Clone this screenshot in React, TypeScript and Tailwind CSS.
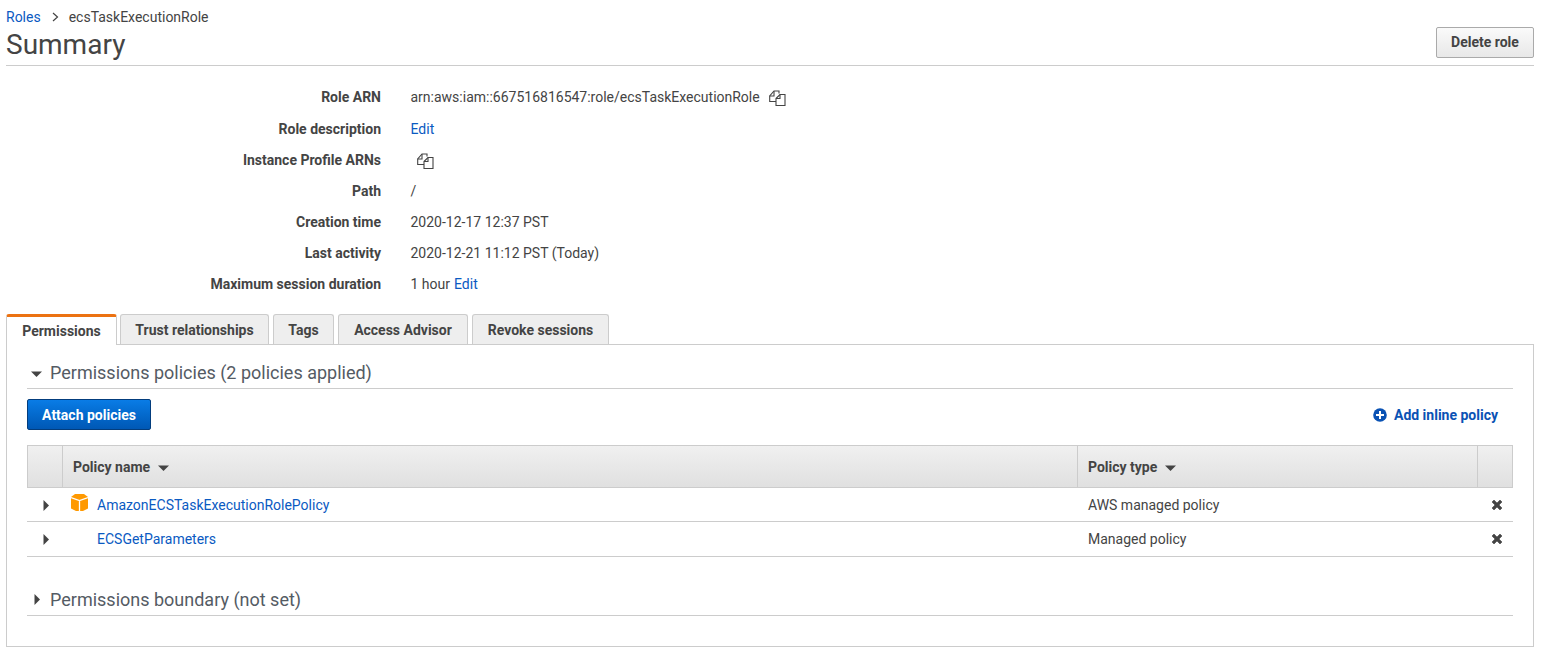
function CopyIcon() {
  return (
    <svg width="17" height="16" viewBox="0 0 17 16" fill="none" stroke="#444" strokeWidth="1.1">
      <path d="M7 11.5H0.7V6L5 1H10V3.5" fill="#fff" />
      <path d="M0.7 6H5V1" />
      <path d="M7 8.5L11 4.5H16V15.5H7Z" fill="#fff" />
      <path d="M7 8.5H11V4.5" />
    </svg>
  )
}

function Caret({ open, className }: { open?: boolean; className?: string }) {
  if (open) {
    return (
      <svg width="11" height="6" viewBox="0 0 11 6" className={className}>
        <path d="M0 0.5H11L5.5 6Z" fill="#444" />
      </svg>
    )
  }
  return (
    <svg width="6" height="11" viewBox="0 0 6 11" className={className}>
      <path d="M0.5 0L6 5.5L0.5 11Z" fill="#444" />
    </svg>
  )
}

function Remove() {
  return (
    <svg width="12" height="12" viewBox="0 0 12 12">
      <path d="M1 3L3 1L6 4L9 1L11 3L8 6L11 9L9 11L6 8L3 11L1 9L4 6Z" fill="#444" stroke="#444" strokeWidth="0.6" />
    </svg>
  )
}

function Row({ label, children, first }: { label: string; children: React.ReactNode; first?: boolean }) {
  return (
    <div className={first ? 'flex h-[31px] items-center mb-px' : 'flex h-[31px] items-center'}>
      <div className="w-[375px] text-right font-bold">{label}</div>
      <div className="ml-[29.5px] flex items-center">{children}</div>
    </div>
  )
}

function Tab({ label, active, width }: { label: string; active?: boolean; width: string }) {
  if (active) {
    return (
      <div className={`relative z-10 -mb-px flex h-[31px] items-center justify-center rounded-t-[3px] border-x border-t-[3px] border-x-[#ccc] border-t-[#ec7211] bg-white font-bold ${width}`}>
        {label}
      </div>
    )
  }
  return (
    <div className={`flex h-[30px] items-center justify-center rounded-t-[3px] border-x border-t border-[#ccc] bg-[#eee] pt-px font-bold ${width}`}>
      {label}
    </div>
  )
}

export default function App() {
  return (
    <div className="h-[655px] overflow-hidden bg-white pl-[6px] pr-[7px] font-['Roboto',sans-serif] text-[14px] text-[#444]">
      <div className="flex h-[66px] justify-between border-b border-[#ccc]">
        <div>
          <div className="flex h-[24px] items-center pt-[10px]">
            <a className="text-[#0a5ac2]">Roles</a>
            <svg width="7" height="10" viewBox="0 0 7 10" fill="none" stroke="#444" strokeWidth="1.2" className="ml-[11px]">
              <path d="M1 1L5.5 5L1 9" />
            </svg>
            <span className="ml-[10px]">ecsTaskExecutionRole</span>
          </div>
          <h1 className="mt-[3px] text-[28px] leading-[36px] text-[#444]">Summary</h1>
        </div>
        <button
          type="button"
          className="mt-[27px] h-[31px] w-[98px] rounded-[2px] border border-[#aaa] bg-linear-to-b from-[#fafafa] to-[#e8e8e8] font-bold"
        >
          Delete role
        </button>
      </div>

      <div className="pt-[16px]">
        <Row label="Role ARN" first>
          <span>arn:aws:iam::667516816547:role/ecsTaskExecutionRole</span>
          <span className="ml-[9px] mt-[1px]"><CopyIcon /></span>
        </Row>
        <Row label="Role description">
          <a className="text-[#0a5ac2]">Edit</a>
        </Row>
        <Row label="Instance Profile ARNs">
          <span className="ml-[6px]"><CopyIcon /></span>
        </Row>
        <Row label="Path">/</Row>
        <Row label="Creation time">2020-12-17 12:37 PST</Row>
        <Row label="Last activity">2020-12-21 11:12 PST (Today)</Row>
        <Row label="Maximum session duration">
          <span>1 hour</span>
          <a className="ml-1 text-[#0a5ac2]">Edit</a>
        </Row>
      </div>

      <div className="mt-[14px] flex items-end gap-[4px]">
        <Tab label="Permissions" active width="w-[111px] -mr-px" />
        <Tab label="Trust relationships" width="w-[149px]" />
        <Tab label="Tags" width="w-[61px]" />
        <Tab label="Access Advisor" width="w-[130px]" />
        <Tab label="Revoke sessions" width="w-[137px]" />
      </div>

      <div className="h-[303px] border border-[#ccc] px-[20px]">
        <div className="flex h-[44px] items-center border-b border-[#ccc] pt-[12px]">
          <Caret open className="ml-[4px] mt-[2px]" />
          <span className="ml-[8px] text-[18px] text-[#545b64]">Permissions policies (2 policies applied)</span>
        </div>

        <div className="flex items-center justify-between pt-[10px]">
          <button
            type="button"
            className="h-[31px] w-[124px] rounded-[2px] border border-[#033d7d] bg-linear-to-b from-[#0a7ce6] to-[#0058b5] pt-px font-bold text-white"
          >
            Attach policies
          </button>
          <a className="mr-[15px] flex items-center pt-px font-bold text-[#0a52b4]">
            <svg width="14" height="14" viewBox="0 0 14 14" className="mr-[7px]">
              <circle cx="7" cy="7" r="6.8" fill="#0a52b4" />
              <path d="M6 3H8V6H11V8H8V11H6V8H3V6H6Z" fill="#fff" />
            </svg>
            Add inline policy
          </a>
        </div>

        <div className="mt-[15px]">
          <div className="flex h-[43px] border border-[#ccc] bg-linear-to-b from-[#f0f0f0] to-[#e0e0e0] pt-px font-bold">
            <div className="-mt-px w-[35px] border-r border-[#ccc]" />
            <div className="-mt-px flex w-[1015px] items-center border-r border-[#ccc] pl-[10px] pt-px">
              Policy name
              <Caret open className="ml-[8px] mt-[2px]" />
            </div>
            <div className="-mt-px flex w-[400px] items-center border-r border-[#ccc] pl-[10px] pt-px">
              Policy type
              <Caret open className="ml-[8px] mt-[2px]" />
            </div>
            <div className="flex-1" />
          </div>

          <div className="flex h-[34px] items-center border-b border-[#ccc] pt-px">
            <div className="w-[35px] pl-[16px]"><Caret /></div>
            <div className="flex w-[1015px] items-center pl-[9px]">
              <svg width="17" height="17" viewBox="0 0 17 17" className="mb-[5px]">
                <path d="M4 0H13L17 3V14.5L12 17H5L0 14.5V3Z" fill="#f90" />
                <path d="M0 3.5L8.5 6.5L17 3.5M8.5 6.5V17" fill="none" stroke="#fff" strokeWidth="1.3" />
              </svg>
              <a className="ml-[9px] text-[#0a5ac2]">AmazonECSTaskExecutionRolePolicy</a>
            </div>
            <div className="w-[400px] pl-[11px]">AWS managed policy</div>
            <div className="flex flex-1 justify-center pl-[3px]"><Remove /></div>
          </div>

          <div className="flex h-[35px] items-center border-b border-[#ccc]">
            <div className="w-[35px] pl-[16px] pt-px"><Caret /></div>
            <div className="w-[1015px] pl-[35px]">
              <a className="text-[#0a5ac2]">ECSGetParameters</a>
            </div>
            <div className="w-[400px] pl-[11px]">Managed policy</div>
            <div className="flex flex-1 justify-center pl-[3px]"><Remove /></div>
          </div>
        </div>

        <div className="mt-[26px] flex h-[33px] items-center border-b border-[#ccc]">
          <Caret className="ml-[7px]" />
          <span className="ml-[10px] text-[18px] text-[#545b64]">Permissions boundary (not set)</span>
        </div>
      </div>
    </div>
  )
}
